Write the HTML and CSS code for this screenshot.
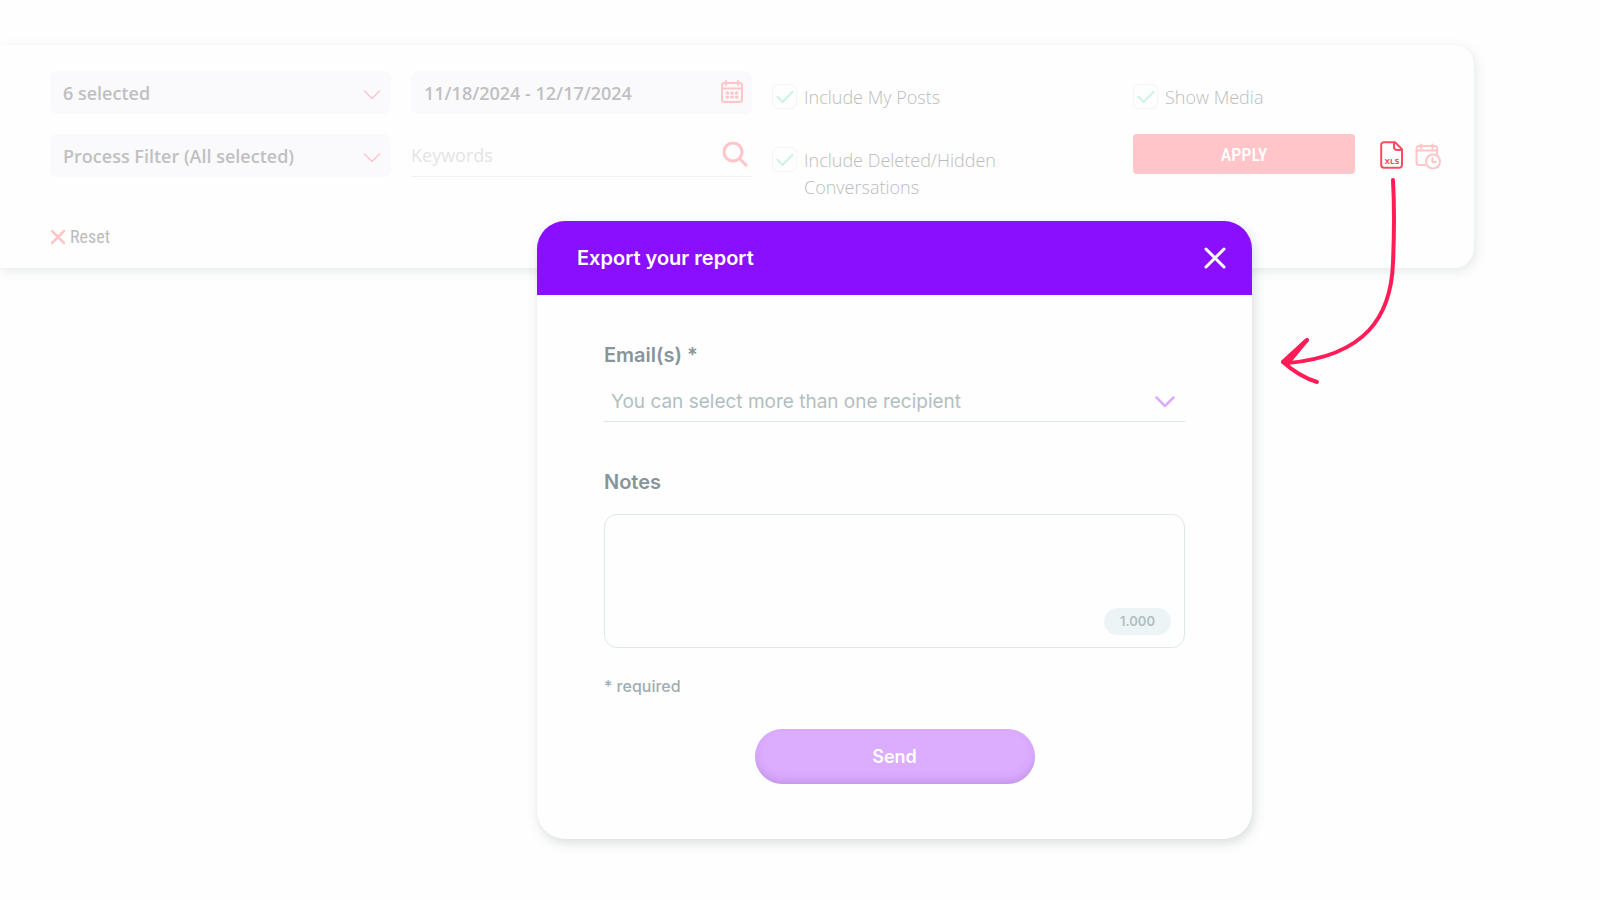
FILE: index.html
```html
<!DOCTYPE html>
<html lang="en">
<head>
  <meta charset="UTF-8">
  <meta name="viewport" content="width=device-width, initial-scale=1">
  <title>Export your report</title>
  <link rel="stylesheet" href="styles.css">
</head>

<body>

  <!-- Filters -->
  <form class="filters">
    <div class="filter-grid">
      <div class="filter-col">
        <div class="field">
          <select class="field-input" aria-label="Sources">
            <option>6 selected</option>
          </select>
          <svg class="chevron" viewBox="0 0 18 11"><path d="M1.500 1.500 9 9l7.500-7.500"/></svg>
        </div>
        <div class="field">
          <select class="field-input" aria-label="Process filter">
            <option>Process Filter (All selected)</option>
          </select>
          <svg class="chevron" viewBox="0 0 18 11"><path d="M1.500 1.500 9 9l7.500-7.500"/></svg>
        </div>
      </div>

      <div class="filter-col">
        <div class="field">
          <input class="field-input" type="text" value="11/18/2024 - 12/17/2024" aria-label="Date range">
          <svg class="calendar" viewBox="0 0 24 24">
            <rect x="2" y="3" width="20" height="19" rx="2"/>
            <path d="M2 8.500h20M6 1v4M18 1v4"/>
            <path class="dots" d="M7 13h.8M11.600 13h.8M16.200 13h.8M7 17h.8M11.600 17h.8M16.200 17h.8"/>
          </svg>
        </div>
        <div class="field">
          <input class="keywords" type="text" placeholder="Keywords" aria-label="Keywords">
          <svg class="search" viewBox="0 0 26 26"><circle cx="11" cy="11" r="9"/><path d="M17.500 17.500 24 24"/></svg>
        </div>
      </div>

      <div class="filter-col checks">
        <label class="check"><input type="checkbox" checked><span>Include My Posts</span></label>
        <label class="check"><input type="checkbox" checked><span>Include Deleted/Hidden Conversations</span></label>
      </div>

      <div class="filter-col checks">
        <label class="check"><input type="checkbox" checked><span>Show Media</span></label>
        <div class="actions">
          <button class="apply-btn" type="button">APPLY</button>
          <button class="icon-btn active" type="button" aria-label="Export XLS">
            <svg viewBox="0 0 24 28">
              <path d="M4 1.200h11l7 7V24a2.800 2.800 0 0 1-2.800 2.800H4A2.800 2.800 0 0 1 1.200 24V4A2.800 2.800 0 0 1 4 1.200z"/>
              <path d="M14 1.500v4.500a3 3 0 0 0 3 3h5"/>
              <text x="12" y="22.500">XLS</text>
            </svg>
          </button>
          <button class="icon-btn" type="button" aria-label="Schedule export">
            <svg viewBox="0 0 26 28">
              <path d="M10 24H4A2.500 2.500 0 0 1 1.500 21.500V7.500A2.500 2.500 0 0 1 4 5h15.500A2.500 2.500 0 0 1 22 7.500V13M1.500 9.500H22M6 3.500v4M17.500 3.500v4"/>
              <circle cx="18" cy="20.500" r="7"/>
              <path d="M17.500 17v4H21"/>
            </svg>
          </button>
        </div>
      </div>
    </div>

    <button class="reset-btn" type="reset">
      <svg viewBox="0 0 16 16"><path d="M2 2l12 12M14 2 2 14"/></svg>
      Reset
    </button>
  </form>

  <!-- Arrow from the XLS icon to the popup -->
  <svg class="arrow" viewBox="0 0 120 212" aria-hidden="true">
    <path d="M113 4C115 40 114 62 113 87C111 140 86 180 8 187"/>
    <path d="M27 164 3 186C13 195 24 202 37 206"/>
    <path class="tip" d="M27 164 3 186l5 1z"/>
  </svg>

  <!-- Export popup -->
  <div class="popup" role="dialog" aria-labelledby="popup-title">
    <div class="popup-header">
      <h2 id="popup-title">Export your report</h2>
      <button class="close-btn" type="button" aria-label="Close">
        <svg viewBox="0 0 22 22"><path d="M2 2l18 18M20 2 2 20"/></svg>
      </button>
    </div>
    <form class="popup-body">
      <label class="popup-label" for="emails">Email(s) *</label>
      <div class="field">
        <select class="emails" id="emails">
          <option>You can select more than one recipient</option>
        </select>
        <svg class="chevron" viewBox="0 0 20 12"><path d="M1.500 1.500 10 10l8.500-8.500"/></svg>
      </div>
      <label class="popup-label" for="notes">Notes</label>
      <div class="notes-box">
        <textarea id="notes"></textarea>
        <span class="counter">1.000</span>
      </div>
      <p class="required">* required</p>
      <button class="send-btn" type="button">Send</button>
    </form>
  </div>

</body>
</html>
```

FILE: styles.css
```css
* {
  margin: 0;
  padding: 0;
  box-sizing: border-box;
}
body {
  font-family: 'Open Sans', sans-serif;
  background: #fefefe;
  min-height: 100vh;
  position: relative;
  padding: 45px 126px 0 0;
}
button, input, select, textarea {
  font-family: inherit;
  border: none;
  background: none;
  outline: none;
}
button {
  cursor: pointer;
}
select {
  appearance: none;
}
svg {
  display: block;
  fill: none;
  stroke: currentColor;
  stroke-width: 2;
  stroke-linecap: round;
  stroke-linejoin: round;
}

/* Filters */
.filters {
  background: #fefefe;
  border-radius: 0 20px 20px 0;
  box-shadow: 2px 3px 12px rgba(50, 80, 80, 0.12);
  padding: 26px 0 21px 50px;
}
.filter-grid {
  display: grid;
  grid-template-columns: repeat(4, 1fr);
  gap: 20px;
}
.filter-col {
  display: flex;
  flex-direction: column;
  gap: 20px;
}
.field {
  position: relative;
  color: #ffc5c9;
}
.field svg {
  position: absolute;
  right: 10px;
  top: 50%;
  transform: translateY(-50%);
  pointer-events: none;
}
.field-input {
  display: block;
  width: 100%;
  height: 43px;
  padding: 0 13px;
  border-radius: 7px;
  background: #fafafc;
  color: #c0c0c0;
  font-size: 18px;
  font-weight: 600;
}
.chevron {
  width: 18px;
  height: 11px;
}
.filters .chevron {
  top: 24px;
  stroke-width: 1.500;
}
.field .calendar {
  width: 24px;
  height: 24px;
  right: 8px;
  top: 21px;
}
.calendar .dots {
  stroke-width: 3;
}
.field .search {
  width: 26px;
  height: 26px;
  right: 4px;
  top: 20px;
  stroke-width: 3;
}
.keywords {
  display: block;
  width: 100%;
  height: 43px;
  border-bottom: 1px solid #f1f1f1;
  font-size: 18px;
  color: #c0c0c0;
}
.keywords::placeholder {
  color: #e4e4e4;
}
.checks {
  padding-top: 13px;
}
.check {
  display: flex;
  align-items: flex-start;
  gap: 7px;
  min-height: 43px;
  font-size: 18px;
  font-weight: 300;
  line-height: 27px;
  color: #bcbcbc;
}
.check span {
  max-width: 220px;
}
.check input {
  appearance: none;
  flex: none;
  width: 25px;
  height: 25px;
  border: 1px solid #f5f5f5;
  border-radius: 6px;
  display: grid;
  place-items: center;
}
.check input:checked::before {
  content: "";
  width: 14px;
  height: 7px;
  border-left: 2px solid #cdf2e7;
  border-bottom: 2px solid #cdf2e7;
  transform: translateY(-2px) rotate(-45deg);
}
.actions {
  display: flex;
  align-items: flex-start;
  gap: 11px;
  margin-top: -13px;
}
.apply-btn {
  width: 222px;
  height: 40px;
  margin-right: 14px;
  border-radius: 4px;
  background: #ffc5c9;
  color: #fff;
  font-family: 'Roboto Condensed', 'Liberation Sans Narrow', sans-serif;
  font-size: 18px;
  font-weight: 500;
}
.icon-btn {
  margin-top: 7px;
  color: #ffc5c9;
}
.icon-btn svg {
  height: 28px;
}
.icon-btn.active {
  color: #ff4b61;
}
.icon-btn text {
  fill: currentColor;
  stroke: none;
  font-family: 'DejaVu Sans', sans-serif;
  font-size: 7px;
  font-weight: 700;
  text-anchor: middle;
}
.reset-btn {
  display: flex;
  align-items: center;
  gap: 4px;
  margin-top: 25px;
  color: #bcbcbc;
  font-family: 'Roboto Condensed', 'Liberation Sans Narrow', sans-serif;
  font-size: 18px;
}
.reset-btn svg {
  width: 16px;
  height: 16px;
  color: #ffc5c9;
  stroke-width: 2.500;
}

/* Arrow */
.arrow {
  position: absolute;
  left: 1280px;
  top: 176px;
  width: 120px;
  color: #ff1d57;
  stroke-width: 4;
}
.arrow .tip {
  fill: currentColor;
}

/* Export popup */
.popup {
  position: absolute;
  left: 537px;
  top: 221px;
  width: 715px;
  max-width: 100%;
  border-radius: 28px;
  overflow: hidden;
  background: #fefefe;
  box-shadow: 2px 4px 12px rgba(50, 70, 80, 0.18);
  font-family: 'Inter', sans-serif;
}
.popup-header {
  display: flex;
  align-items: center;
  justify-content: space-between;
  height: 74px;
  padding: 0 26px 0 40px;
  background: #8a0fff;
  color: #fff;
}
.popup-header h2 {
  font-size: 20px;
  font-weight: 600;
}
.close-btn {
  color: #fff;
}
.close-btn svg {
  width: 22px;
  height: 22px;
  stroke-width: 3;
}
.popup-body {
  display: flex;
  flex-direction: column;
  padding: 48px 67px 55px;
}
.popup-label {
  font-size: 20px;
  font-weight: 600;
  line-height: 24px;
  color: #87959b;
}
.popup-body .field {
  margin: 14px 0 48px;
  color: #dbacff;
}
.popup-body .chevron {
  width: 20px;
  height: 12px;
  stroke-width: 2.500;
}
.emails {
  display: block;
  width: 100%;
  height: 41px;
  padding: 0 7px;
  border-bottom: 1px solid #dde6e8;
  font-size: 19px;
  color: #b2bfc0;
}
.notes-box {
  position: relative;
  margin-top: 20px;
}
.notes-box textarea {
  display: block;
  width: 100%;
  height: 134px;
  padding: 12px;
  border: 1px solid #dfe8ea;
  border-radius: 13px;
  resize: none;
}
.counter {
  position: absolute;
  right: 14px;
  bottom: 13px;
  padding: 0 16px;
  border-radius: 14px;
  background: #ecf4f6;
  color: #b2bfc0;
  font-size: 13px;
  font-weight: 600;
  line-height: 27px;
}
.required {
  margin: 28px 0 33px;
  font-size: 16px;
  font-weight: 500;
  line-height: 20px;
  color: #a0adb2;
}
.send-btn {
  align-self: center;
  width: 280px;
  height: 55px;
  border-radius: 28px;
  background: #dbacff;
  box-shadow: inset 0 -5px 10px -2px rgba(120, 70, 150, 0.25);
  color: #fff;
  font-size: 18px;
  font-weight: 600;
}
```
